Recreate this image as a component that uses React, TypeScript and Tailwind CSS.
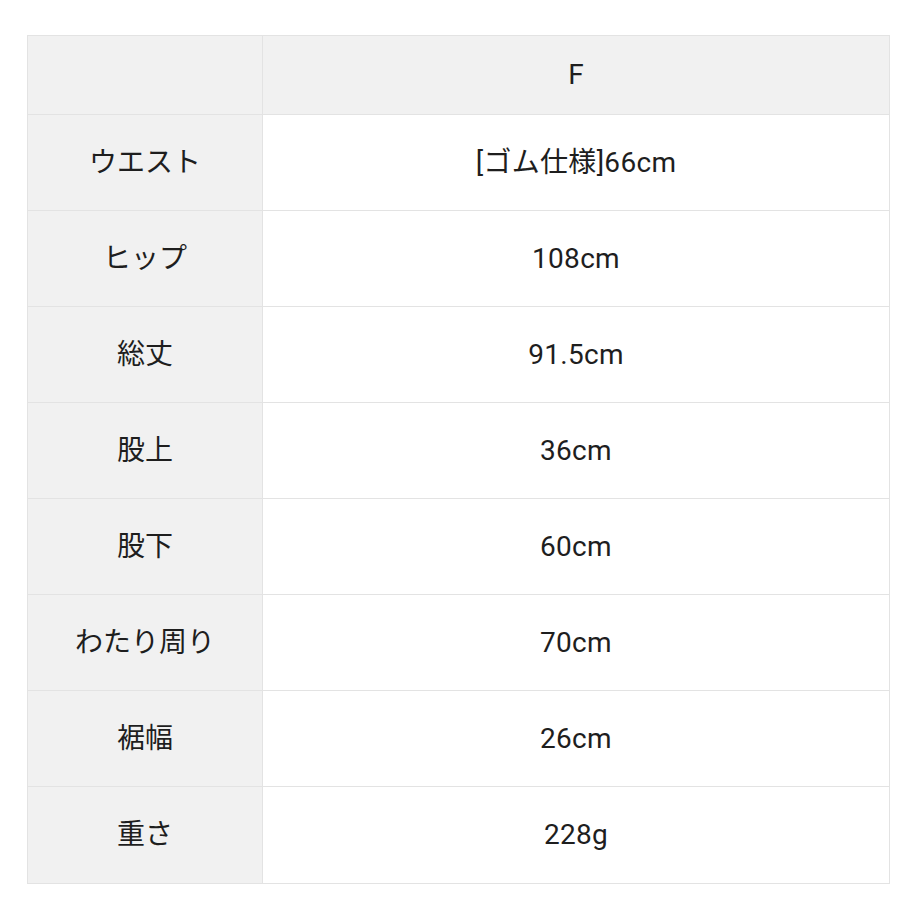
const rows: [string, string][] = [
  ['ウエスト', '[ゴム仕様]66cm'],
  ['ヒップ', '108cm'],
  ['総丈', '91.5cm'],
  ['股上', '36cm'],
  ['股下', '60cm'],
  ['わたり周り', '70cm'],
  ['裾幅', '26cm'],
  ['重さ', '228g'],
];

export default function App() {
  return (
    <div
      className="w-[900px] h-[900px] bg-white pt-[35px] pl-[27px] text-[#1e1e1e]"
      style={{ fontFamily: 'Roboto, "Noto Sans CJK JP", sans-serif' }}
    >
      <div className="w-[863px] grid grid-cols-[235px_1fr] border border-[#e3e3e3] text-[28px]">
        <div className="h-[79px] bg-[#f1f1f1] border-r border-b border-[#e3e3e3]" />
        <div className="h-[79px] bg-[#f1f1f1] border-b border-[#e3e3e3] flex items-center justify-center">
          F
        </div>
        {rows.map(([label, value], i) => (
          <div key={label} className="contents">
            <div
              className={`h-[96px] bg-[#f1f1f1] border-r border-[#e3e3e3] flex items-center justify-center ${
                i < rows.length - 1 ? 'border-b' : ''
              }`}
            >
              {label}
            </div>
            <div
              className={`h-[96px] bg-white border-[#e3e3e3] flex items-center justify-center tracking-[0.3px] ${
                i < rows.length - 1 ? 'border-b' : ''
              }`}
            >
              {value}
            </div>
          </div>
        ))}
      </div>
    </div>
  );
}
